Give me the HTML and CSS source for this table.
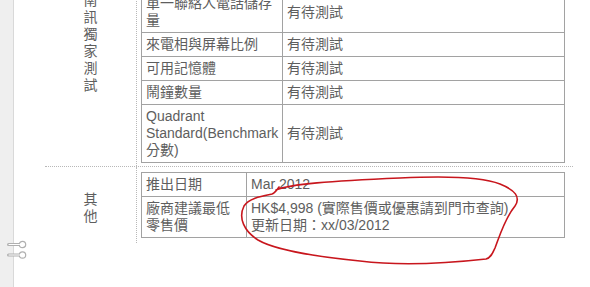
FILE: index.html
```html
<!DOCTYPE html>
<html lang="zh-Hant">
<head>
<meta charset="utf-8">
<title>規格表</title>
<link rel="stylesheet" href="styles.css">
</head>
<body>
<div class="page">
  <aside class="rail"></aside>
  <main class="content">
    <section class="spec-group">
      <div class="group-label"><span class="vtext">南訊獨家測試</span></div>
      <div class="group-body">
        <table class="spec-table">
          <colgroup><col class="col-a"><col class="col-b"></colgroup>
          <tr><td>電話簿容量</td><td>有待測試</td></tr>
          <tr><td>來電記錄</td><td>有待測試</td></tr>
          <tr><td>短訊儲存量</td><td>有待測試</td></tr>
          <tr><td>單一聯絡人電話儲存量</td><td>有待測試</td></tr>
          <tr><td>來電相與屏幕比例</td><td>有待測試</td></tr>
          <tr><td>可用記憶體</td><td>有待測試</td></tr>
          <tr><td>鬧鐘數量</td><td>有待測試</td></tr>
          <tr><td>Quadrant Standard(Benchmark分數)</td><td>有待測試</td></tr>
        </table>
      </div>
    </section>
    <section class="spec-group last">
      <div class="group-label"><span class="vtext">其他</span></div>
      <div class="group-body">
        <table class="spec-table">
          <colgroup><col class="col-c"><col class="col-d"></colgroup>
          <tr><td>推出日期</td><td>Mar 2012</td></tr>
          <tr><td>廠商建議最低零售價</td><td>HK$4,998 (實際售價或優惠請到門市查詢)<br>更新日期：xx/03/2012</td></tr>
        </table>
      </div>
    </section>
  </main>
  <svg class="annotation" width="590" height="287" viewBox="0 0 590 287">
    <path d="M 276,190 C 290,184 330,181 400,178 C 440,176 480,176 500,184 C 515,190 521,197 515,206 C 505,218 500,235 495,248 C 492,255 490,258 486,259 C 450,263 400,266 360,261 C 320,257 275,250 258,240 C 244,231 238,218 244,206 C 249,198 262,196 272,194 C 275,193 277,190 279,187" fill="none" stroke="#c8161d" stroke-width="1.6" stroke-linecap="round" stroke-linejoin="round"/>
  </svg>
  <div class="link-widget">
    <svg width="22" height="20" viewBox="0 0 22 20">
      <path d="M1.5,4.5 H13" fill="none" stroke="#b0b0b0" stroke-width="3" stroke-linecap="round"/>
      <circle cx="15.5" cy="4.5" r="3.2" fill="#fff" stroke="#b0b0b0" stroke-width="1.2"/>
      <path d="M1.5,15 H13" fill="none" stroke="#b0b0b0" stroke-width="3" stroke-linecap="round"/>
      <circle cx="15.5" cy="15" r="3.2" fill="#fff" stroke="#b0b0b0" stroke-width="1.2"/>
      <path d="M2,4.5 H12.5 M2,15 H12.5" fill="none" stroke="#fff" stroke-width="1" stroke-linecap="round"/>
    </svg>
  </div>
</div>
</body>
</html>
```
FILE: styles.css
```css
html, body {
  margin: 0;
  padding: 0;
  background: #ffffff;
}

body {
  font-family: "Liberation Sans", "Noto Sans CJK TC", sans-serif;
  font-size: 14px;
  line-height: 17px;
  color: #5e5e5e;
  overflow: hidden;
}

.page {
  position: relative;
  display: flex;
  width: 590px;
  height: 287px;
  overflow: hidden;
}

.rail {
  flex: 0 0 13px;
  background: #efefef;
  border-right: 1px solid #d9d9d9;
}

.content {
  flex: 1 1 auto;
  padding-left: 31px;
  margin-top: -86px;
}

.spec-group {
  display: grid;
  grid-template-columns: 92px 1fr;
  width: 528px;
  border-bottom: 1px dotted #b8b8b8;
}

.spec-group.last {
  border-bottom: none;
}

.group-label {
  border-right: 1px dotted #b8b8b8;
  display: flex;
  align-items: center;
  justify-content: center;
  padding-top: 5px;
}

.vtext {
  display: block;
  width: 14px;
  word-break: break-all;
  text-align: center;
}

.group-body {
  padding: 5px 0 3px 4px;
}

.spec-group.last .group-body {
  padding-bottom: 5px;
}

.spec-table {
  border-collapse: collapse;
  table-layout: fixed;
  width: 423px;
}

.spec-table td {
  border: 1px solid #a2a2a2;
  padding: 3px 4px;
  vertical-align: middle;
  text-align: left;
}

.col-a { width: 141px; }
.col-b { width: 282px; }
.col-c { width: 105px; }
.col-d { width: 318px; }

.annotation {
  position: absolute;
  left: 0;
  top: 0;
  pointer-events: none;
}

.link-widget {
  position: absolute;
  left: 7px;
  top: 240px;
  width: 22px;
  height: 20px;
}
```
